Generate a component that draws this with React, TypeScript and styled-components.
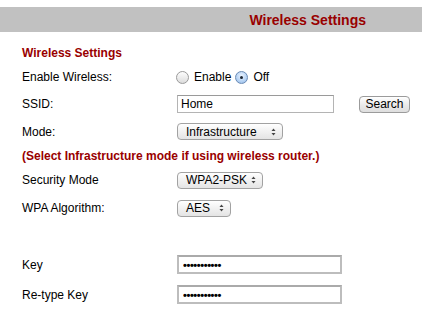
import React from "react";
import styled, {createGlobalStyle} from "styled-components";

const GlobalStyle = createGlobalStyle`
    body {
        margin: 0;
        background: #ffffff;
        font-family: "Liberation Sans", Arial, Helvetica, sans-serif;
        color: #000000;
    }
`;

const Page = styled.div`
    width: 422px;
    height: 320px;
    overflow: hidden;
    padding-top: 7px;
    box-sizing: border-box;
`;

const TitleBar = styled.div`
    height: 25px;
    background: #c1c1c1;
    display: flex;
    align-items: center;
    justify-content: flex-end;
    padding-right: 56px;
    color: #990000;
    font-size: 14px;
    font-weight: bold;
`;

const Content = styled.div`
    padding: 0 22px;
`;

const Heading = styled.div`
    margin-top: 14px;
    margin-bottom: 4px;
    height: 14px;
    line-height: 14px;
    color: #990000;
    font-size: 12px;
    font-weight: bold;
`;

const Row = styled.div<{$h: number}>`
    display: flex;
    align-items: center;
    height: ${p => p.$h}px;
    font-size: 12px;

    & > * {
        flex-shrink: 0;
    }
`;

const Label = styled.div`
    width: 155px;
`;

const Note = styled.div`
    color: #990000;
    font-weight: bold;
    font-size: 12px;
`;

const RadioGroup = styled.div`
    display: flex;
    align-items: center;
`;

const Radio = styled.span<{$checked?: boolean}>`
    width: 13px;
    height: 13px;
    box-sizing: border-box;
    border-radius: 50%;
    border: 1px solid ${p => (p.$checked ? "#6a8bb5" : "#9a9a9a")};
    background: ${p => (p.$checked
        ? "radial-gradient(circle at 50% 35%, #eaf3ff 0%, #b5d2f3 60%, #8fb6e6 100%)"
        : "linear-gradient(#fdfdfd, #dcdcdc)")};
    display: inline-flex;
    align-items: center;
    justify-content: center;
    margin-left: ${p => (p.$checked ? "4px" : "-1px")};
    margin-right: 5px;

    &::after {
        content: "";
        display: ${p => (p.$checked ? "block" : "none")};
        width: 3px;
        height: 3px;
        border-radius: 50%;
        background: #1b2633;
    }
`;

const TextInput = styled.input<{$w: number; $h: number}>`
    width: ${p => p.$w}px;
    height: ${p => p.$h}px;
    box-sizing: border-box;
    margin: 0;
    padding: 0 3px;
    border: 1px solid #b4b4b4;
    border-top-color: #9a9a9a;
    font-family: "Liberation Sans", Arial, sans-serif;
    font-size: 12px;
    color: #000;
    background: #fff;
    outline: none;
`;

const KeyInput = styled(TextInput)`
    border: 2px solid #bdbdbd;
    border-top-color: #aaaaaa;
    padding: 0 4px;
    font-size: 11px;
    font-weight: bold;
    letter-spacing: -0.4px;
`;

const Button = styled.button`
    margin-left: 25px;
    width: 51px;
    height: 17px;
    box-sizing: border-box;
    padding: 0;
    border: 1px solid #9b9b9b;
    border-radius: 4px;
    background: linear-gradient(#ffffff, #e9e9e9 55%, #dedede);
    font-family: "Liberation Sans", Arial, sans-serif;
    font-size: 12px;
    color: #000;
`;

const SelectBox = styled.div<{$w: number}>`
    width: ${p => p.$w}px;
    height: 17px;
    box-sizing: border-box;
    border: 1px solid #a2a2a2;
    border-radius: 4px;
    background: linear-gradient(#ffffff, #f1f1f1 50%, #e4e4e4);
    display: flex;
    align-items: center;
    justify-content: space-between;
    padding: 0 6px 0 8px;
    font-size: 12px;
`;

const Arrows = () => (
    <svg width="5" height="8" viewBox="0 0 5 8">
        <path d="M0.5 3 L2.5 0.5 L4.5 3 Z" fill="#444" />
        <path d="M0.5 5 L2.5 7.5 L4.5 5 Z" fill="#444" />
    </svg>
);

const Select = ({w, value}: {w: number; value: string}) => (
    <SelectBox $w={w}>
        <span>{value}</span>
        <Arrows />
    </SelectBox>
);

export default function App() {
    return (
        <Page>
            <GlobalStyle />
            <TitleBar>Wireless Settings</TitleBar>
            <Content>
                <Heading>Wireless Settings</Heading>
                <Row $h={26}>
                    <Label>Enable Wireless:</Label>
                    <RadioGroup>
                        <Radio />
                        <span>Enable</span>
                        <Radio $checked />
                        <span>Off</span>
                    </RadioGroup>
                </Row>
                <Row $h={28}>
                    <Label>SSID:</Label>
                    <TextInput $w={157} $h={18} defaultValue="Home" />
                    <Button>Search</Button>
                </Row>
                <Row $h={27}>
                    <Label>Mode:</Label>
                    <Select w={106} value="Infrastructure" />
                </Row>
                <Row $h={22}>
                    <Note>(Select Infrastructure mode if using wireless router.)</Note>
                </Row>
                <Row $h={26}>
                    <Label>Security Mode</Label>
                    <Select w={86} value="WPA2-PSK" />
                </Row>
                <Row $h={30}>
                    <Label>WPA Algorithm:</Label>
                    <Select w={54} value="AES" />
                </Row>
                <Row $h={26} />
                <Row $h={31}>
                    <Label>Key</Label>
                    <KeyInput $w={165} $h={19} defaultValue="•••••••••••" readOnly />
                </Row>
                <Row $h={29}>
                    <Label>Re-type Key</Label>
                    <KeyInput $w={165} $h={19} defaultValue="•••••••••••" readOnly />
                </Row>
            </Content>
        </Page>
    );
}
